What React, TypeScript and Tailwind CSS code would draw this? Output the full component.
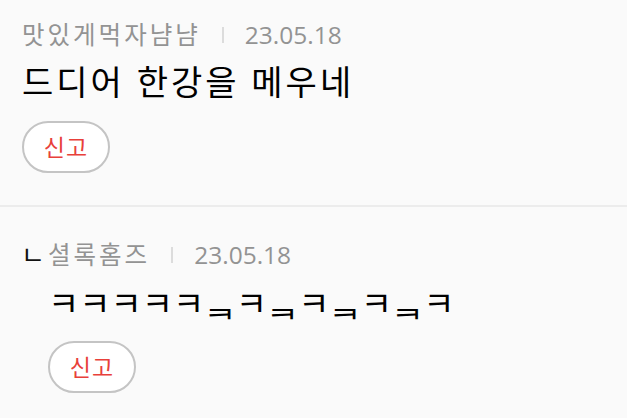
import React from "react";

const FONT = { fontFamily: '"Open Sans", "Noto Sans CJK KR", sans-serif' };

function ReportButton() {
  return (
    <button className="h-[52px] w-[88px] rounded-full border-2 border-[#c4c4c4] bg-white text-[23px] leading-none text-[#e8403a] tracking-[1px] flex items-center justify-center">
      신고
    </button>
  );
}

function Meta({ name }: { name: string }) {
  return (
    <div className="flex items-center h-[30px] text-[24.5px] leading-[30px] text-[#939393]">
      <span className="tracking-[3px]">{name}</span>
      <span className="mx-[21px] h-[16px] w-[2px] bg-[#dcdcdc]" />
      <span>23.05.18</span>
    </div>
  );
}

export default function App() {
  return (
    <div className="w-[627px] h-[418px] bg-[#fafafa] overflow-hidden" style={FONT}>
      <div className="pl-[22px] pt-[20px] pb-[32px] flex flex-col items-start">
        <Meta name="맛있게먹자냠냠" />
        <div className="mt-[10px] h-[44px] text-[34px] leading-[44px] tracking-[3px] text-black">드디어 한강을 메우네</div>
        <div className="mt-[17px]">
          <ReportButton />
        </div>
      </div>
      <div className="h-[2px] bg-[#ececec]" />
      <div className="pl-[22px] pt-[33px] flex flex-col items-start">
        <div className="flex items-center h-[30px]">
          <span className="w-[26px] shrink-0 -ml-[1px] text-[26px] leading-[30px] text-[#111]">ㄴ</span>
          <span className="w-[1px] shrink-0" />
          <Meta name="셜록홈즈" />
        </div>
        <div className="pl-[26px] flex flex-col items-start">
          <div className="mt-[11px] h-[44px] text-[34px] leading-[44px] text-black">ㅋㅋㅋㅋㅋᆿㅋᆿㅋᆿㅋᆿㅋ</div>
          <div className="mt-[16px]">
            <ReportButton />
          </div>
        </div>
      </div>
    </div>
  );
}
